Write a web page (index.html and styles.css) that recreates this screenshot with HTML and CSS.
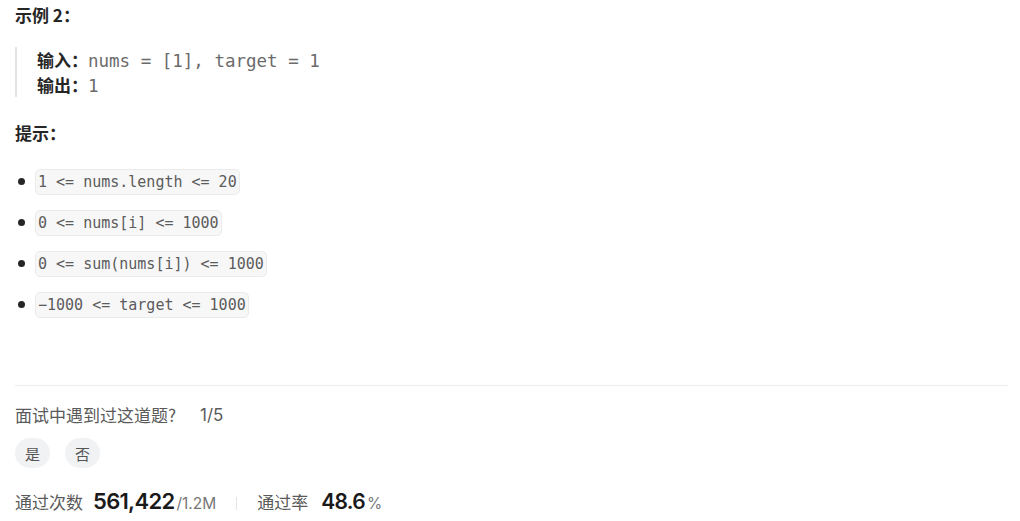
FILE: index.html
```html
<!DOCTYPE html>
<html lang="zh">
<head>
<meta charset="utf-8">
<link rel="stylesheet" href="styles.css">
</head>
<body>
<div class="desc">
  <p class="heading">示例 2：</p>
  <blockquote class="example">
    <div class="line"><strong>输入：</strong><span class="mono">nums = [1], target = 1</span></div>
    <div class="line"><strong>输出：</strong><span class="mono">1</span></div>
  </blockquote>
  <p class="heading hint">提示：</p>
  <ul class="constraints">
    <li><code>1 &lt;= nums.length &lt;= 20</code></li>
    <li><code>0 &lt;= nums[i] &lt;= 1000</code></li>
    <li><code>0 &lt;= sum(nums[i]) &lt;= 1000</code></li>
    <li><code>−1000 &lt;= target &lt;= 1000</code></li>
  </ul>
</div>
<hr class="sep">
<div class="interview">
  <div class="q"><span>面试中遇到过这道题?</span><span class="count">1/5</span></div>
  <div class="btns"><button class="pill">是</button><button class="pill">否</button></div>
</div>
<div class="stats">
  <span class="label">通过次数</span>
  <span class="big">561,422</span><span class="small">/1.2M</span>
  <span class="divider"></span>
  <span class="label">通过率</span>
  <span class="big rate">48.6</span><span class="small">%</span>
</div>
</body>
</html>
```
FILE: styles.css
```css
html, body {
  margin: 0;
  padding: 0;
  background: #fff;
}
body {
  padding: 4px 12px 0 15px;
  font-family: Inter, "Noto Sans CJK SC", sans-serif;
  color: #262626;
}
.heading {
  margin: 0;
  font-size: 17px;
  line-height: 22px;
  font-weight: 700;
  font-family: "Noto Sans CJK SC", sans-serif;
}
.example {
  margin: 21px 0 0 0;
  padding: 0 0 0 20px;
  border-left: 2px solid #e4e4e4;
}
.line {
  height: 25px;
  line-height: 25px;
  white-space: pre;
}
.line strong {
  font-family: "Noto Sans CJK SC", sans-serif;
  font-size: 17px;
  font-weight: 700;
  color: #262626;
}
.mono {
  font-family: "DejaVu Sans Mono", monospace;
  font-size: 17.5px;
  color: #6b6b6b;
}
.hint {
  margin-top: 25px;
}
.constraints {
  margin: 25px 0 0 0;
  padding: 0 0 0 20px;
  list-style: none;
}
.constraints li {
  position: relative;
  height: 25px;
  display: flex;
  align-items: center;
  margin-bottom: 16px;
}
.constraints li::before {
  content: "";
  position: absolute;
  left: -17px;
  top: 9px;
  width: 7px;
  height: 7px;
  border-radius: 50%;
  background: #262626;
}
code {
  font-family: "DejaVu Sans Mono", monospace;
  font-size: 15px;
  line-height: 24px;
  color: #5c5c5c;
  background: #f7f7f8;
  border: 1px solid #ebebeb;
  border-radius: 5px;
  padding: 0 2px;
}
.sep {
  margin: 68px 0 0 0;
  border: 0;
  border-top: 1px solid #ececec;
  height: 0;
}
.interview {
  margin-top: 17px;
}
.q {
  font-family: "Noto Sans CJK SC", sans-serif;
  font-size: 17px;
  line-height: 24px;
  color: #5a5a5a;
  display: flex;
  gap: 24px;
}
.count {
  font-family: Inter, sans-serif;
}
.btns {
  display: flex;
  gap: 15px;
  margin-top: 11px;
}
.pill {
  width: 35px;
  height: 30px;
  border: 0;
  border-radius: 15px;
  background: #f1f2f3;
  color: #555;
  font-family: "Noto Sans CJK SC", sans-serif;
  font-size: 15px;
  padding: 0;
}
.stats {
  margin-top: 20px;
  display: flex;
  align-items: baseline;
  height: 30px;
}
.label {
  font-family: "Noto Sans CJK SC", sans-serif;
  font-size: 17px;
  color: #5a5a5a;
  margin-right: 10px;
}
.big {
  font-family: Inter, sans-serif;
  font-weight: 600;
  font-size: 22px;
  color: #1a1a1a;
  letter-spacing: -0.7px;
}
.rate {
  margin-left: 3px;
  font-size: 21px;
}
.small {
  font-family: Inter, sans-serif;
  font-size: 15.5px;
  color: #777;
  margin-left: 2px;
}
.divider {
  width: 1px;
  height: 13px;
  background: #e4e4e4;
  margin: 0 20px;
  align-self: center;
}
```
